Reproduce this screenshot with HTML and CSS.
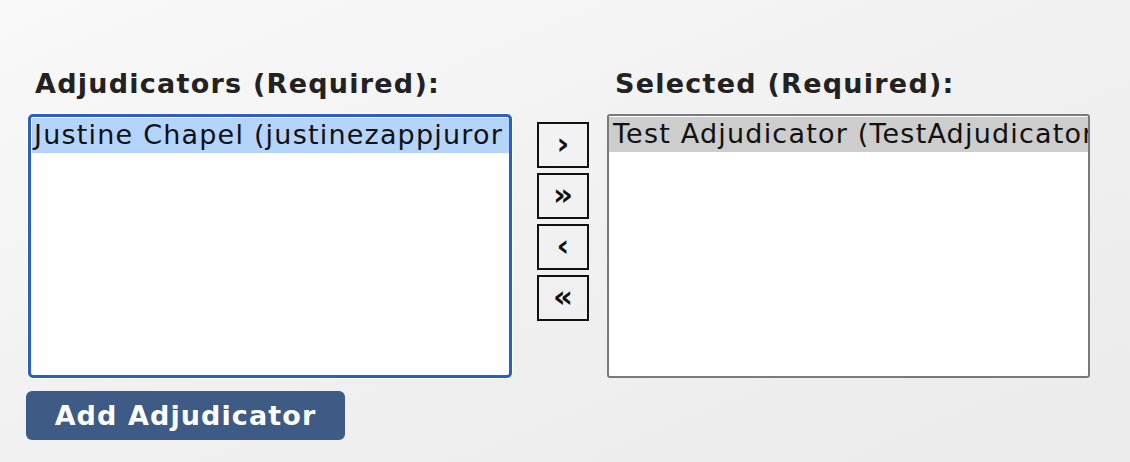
FILE: index.html
```html
<!DOCTYPE html>
<html lang="en">
<head>
<meta charset="utf-8">
<title>Adjudicators</title>
<link rel="stylesheet" href="styles.css">
</head>
<body>
<div class="picker">
  <div class="col col-left">
    <h2 class="label">Adjudicators (Required):</h2>
    <div class="listbox listbox-focus">
      <div class="option option-active">Justine Chapel (justinezappjuror</div>
    </div>
    <button class="add-btn" type="button">Add Adjudicator</button>
  </div>
  <div class="moves">
    <button class="move" type="button">&rsaquo;</button>
    <button class="move" type="button">&raquo;</button>
    <button class="move" type="button">&lsaquo;</button>
    <button class="move" type="button">&laquo;</button>
  </div>
  <div class="col col-right">
    <h2 class="label">Selected (Required):</h2>
    <div class="listbox listbox-plain">
      <div class="option option-selected">Test Adjudicator (TestAdjudicator</div>
    </div>
  </div>
</div>
</body>
</html>
```
FILE: styles.css
```css
html, body {
  margin: 0;
  height: 100%;
}
body {
  background: linear-gradient(to bottom right, #f9f9f9 0%, #f0f0f0 55%, #ebebeb 100%);
  font-family: "DejaVu Sans", Verdana, sans-serif;
  color: #222;
}
.picker {
  display: flex;
  align-items: flex-start;
  padding: 67px 0 0 28px;
}
.col {
  display: flex;
  flex-direction: column;
}
.col-left { width: 484px; }
.col-right { width: 483px; }
.label {
  margin: 0 0 14px 7px;
  font-size: 27px;
  font-weight: bold;
  letter-spacing: 1.25px;
  line-height: 33px;
  color: #222;
  white-space: nowrap;
}
.col-right .label { margin-left: 8px; }
.listbox {
  box-sizing: border-box;
  height: 264px;
  background: #fff;
  overflow: hidden;
}
.listbox-focus {
  border: 3px solid #2b5fc7;
  border-radius: 5px;
  padding: 1px 0 0 1px;
  box-shadow: 0 0 0 1px #fff;
}
.listbox-plain {
  border: 2px solid #7a7a7a;
  border-radius: 3px;
  padding: 1px 0 0 0;
}
.option {
  height: 35px;
  line-height: 34px;
  font-size: 27px;
  letter-spacing: 1.2px;
  white-space: nowrap;
  overflow: hidden;
  color: #111;
  padding-left: 2px;
}
.option-active { background: #b5d4fb; }
.option-selected { background: #cdcdcd; padding-left: 4px; }
.moves {
  display: flex;
  flex-direction: column;
  gap: 5px;
  margin: 55px 18px 0 25px;
}
.move {
  box-sizing: border-box;
  width: 52px;
  height: 46px;
  border: 2px solid #111;
  background: transparent;
  font-family: "DejaVu Sans", Verdana, sans-serif;
  font-size: 31px;
  font-weight: bold;
  line-height: 1;
  color: #111;
  padding: 0 0 3px 0;
  margin: 0;
}
.add-btn {
  align-self: flex-start;
  margin: 13px 0 0 -2px;
  width: 319px;
  height: 49px;
  border: none;
  border-radius: 6px;
  background: #3d5b84;
  color: #fff;
  font-family: "DejaVu Sans", Verdana, sans-serif;
  font-size: 27px;
  font-weight: bold;
  letter-spacing: 1.1px;
  padding: 0;
}
```
